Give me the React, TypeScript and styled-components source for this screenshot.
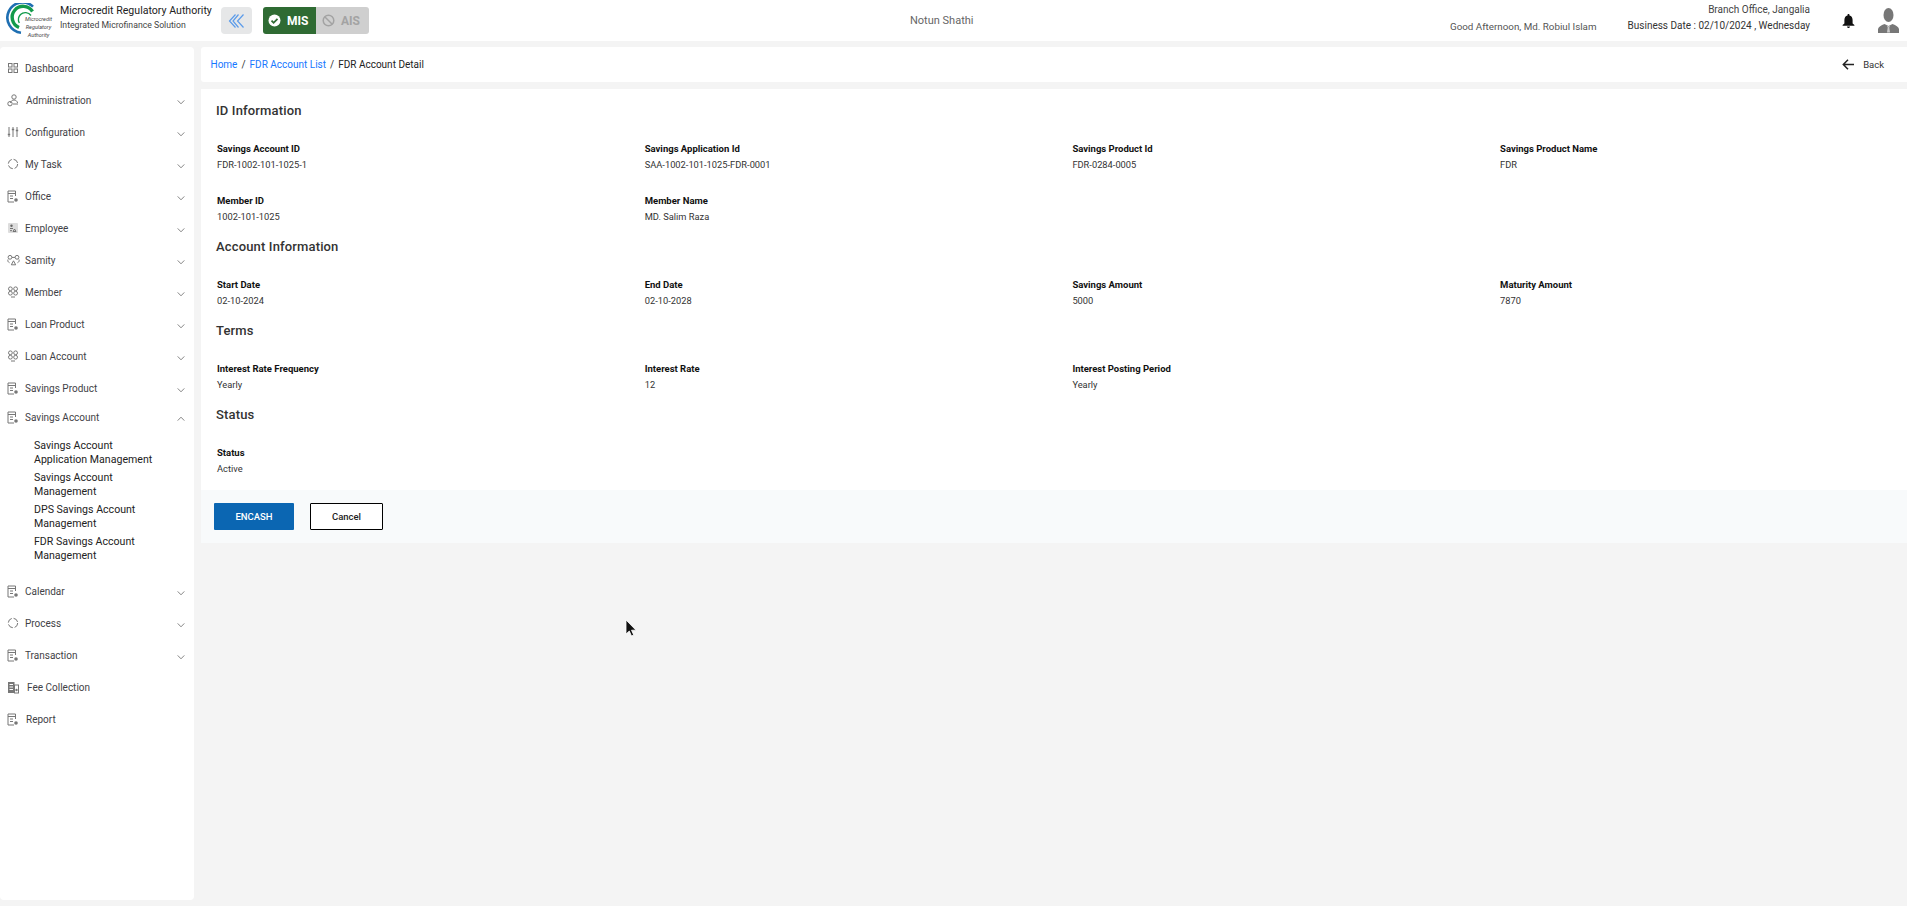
import styled, { createGlobalStyle } from 'styled-components';

const GlobalStyle = createGlobalStyle`
  html, body {
    margin: 0;
    padding: 0;
    background: #f4f4f4;
    font-family: Roboto, "Liberation Sans", sans-serif;
    overflow: hidden;
  }
  * { box-sizing: border-box; }
`;

type IconName = 'grid' | 'admin' | 'sliders' | 'ring' | 'doc' | 'badge' | 'samity' | 'people' | 'fee';

function MenuIcon({ name }: { name: IconName }) {
  const common = { fill: 'none', stroke: '#777', strokeWidth: 1 };
  switch (name) {
    case 'grid':
      return (
        <svg width="12" height="12" viewBox="0 0 12 12" {...common}>
          <rect x="1.5" y="1.5" width="3.5" height="3.5" />
          <rect x="7" y="1.5" width="3.5" height="3.5" />
          <rect x="1.5" y="7" width="3.5" height="3.5" />
          <rect x="7" y="7" width="3.5" height="3.5" />
        </svg>
      );
    case 'admin':
      return (
        <svg width="12" height="13" viewBox="0 0 12 13" {...common}>
          <circle cx="7" cy="3" r="2.2" />
          <path d="M3.500 9c.3-2 1.800-3 3.500-3s3.200 1 3.600 3" />
          <circle cx="3" cy="9.700" r="2.200" />
          <path d="M6 10h5" />
        </svg>
      );
    case 'sliders':
      return (
        <svg width="12" height="12" viewBox="0 0 12 12" {...common}>
          <path d="M2 1v10M6 1v10M10 1v10" />
          <path d="M.8 8.500h2.400M4.800 3.500h2.400M8.800 4.500h2.400" strokeWidth="1.4" />
        </svg>
      );
    case 'ring':
      return (
        <svg width="12" height="12" viewBox="0 0 12 12" {...common}>
          <circle cx="6" cy="6" r="4.700" strokeDasharray="5.500 1.900" />
        </svg>
      );
    case 'doc':
      return (
        <svg width="12" height="13" viewBox="0 0 12 13" {...common}>
          <path d="M8.500 6V1H1v11h6" />
          <path d="M1 3.500h7.500M3 6h3M3 8.500h3" />
          <circle cx="9" cy="10" r="1.800" fill="#777" stroke="none" />
        </svg>
      );
    case 'badge':
      return (
        <svg width="12" height="12" viewBox="0 0 12 12">
          <rect x="1" y="1" width="10" height="10" rx="1" fill="#ddd" />
          <circle cx="4.500" cy="3.800" r="1.200" fill="#666" />
          <path d="M3 6.500h3M6 9.500l1.500-2.500 1.500 2.500zM3 8.700h2" stroke="#666" fill="none" strokeWidth="0.9" />
        </svg>
      );
    case 'samity':
      return (
        <svg width="13" height="12" viewBox="0 0 13 12" {...common}>
          <circle cx="3" cy="3.300" r="1.900" />
          <circle cx="10" cy="3.300" r="1.900" />
          <path d="M1 5.500c-.5 1.500 0 2.500 1.500 3.200M12 5.500c.5 1.500 0 2.500-1.500 3.200" />
          <path d="M4.300 10.800l2.200-4 2.200 4zM5 3.400h3" />
        </svg>
      );
    case 'people':
      return (
        <svg width="12" height="12" viewBox="0 0 12 12" {...common}>
          <circle cx="3.400" cy="2.800" r="1.900" />
          <circle cx="8.600" cy="2.800" r="1.900" />
          <circle cx="3.400" cy="7.200" r="1.900" />
          <circle cx="8.600" cy="7.200" r="1.900" />
          <path d="M4 11h4" />
        </svg>
      );
    case 'fee':
      return (
        <svg width="12" height="13" viewBox="0 0 12 13">
          <rect x="1" y="1" width="6.500" height="11" fill="#777" />
          <rect x="7.500" y="4" width="4" height="8" fill="none" stroke="#777" />
          <path d="M2.500 3.500h3.500M2.500 6h3.500M2.500 8.500h3.500" stroke="#fff" strokeWidth="1" />
          <circle cx="9.500" cy="9" r="1.200" fill="#777" />
        </svg>
      );
  }
}

function Chevron({ up }: { up?: boolean }) {
  return (
    <svg width="8" height="6" viewBox="0 0 8 6" fill="none" stroke="#777" strokeWidth="0.9">
      <path d={up ? 'M.7 4.600L4 1.200l3.300 3.400' : 'M.7 1.400L4 4.800l3.300-3.400'} />
    </svg>
  );
}

function Logo() {
  return (
    <LogoBox>
      <svg width="34" height="34" viewBox="0 0 34 34" fill="none">
        <path d="M27 3.600A15.200 15.200 0 1 0 15 29.800" stroke="#1f6fb2" strokeWidth="2.600" />
        <path d="M26.500 8.500A11 11 0 1 0 13 24.500" stroke="#129a4a" strokeWidth="3.400" />
        <path d="M25 12.500A7 7 0 0 0 14.500 11.500a7.500 7.500 0 0 0-1.200 8.500" stroke="#129a4a" strokeWidth="1.400" />
      </svg>
      <LogoText>
        <span>Microcredit</span>
        <span>Regulatory</span>
        <span>Authority</span>
      </LogoText>
    </LogoBox>
  );
}

interface MenuEntry {
  label: string;
  icon: IconName;
  chevron?: boolean;
  nudge?: number;
}

const topMenu: MenuEntry[] = [
  { label: 'Dashboard', icon: 'grid' },
  { label: 'Administration', icon: 'admin', chevron: true, nudge: 1 },
  { label: 'Configuration', icon: 'sliders', chevron: true },
  { label: 'My Task', icon: 'ring', chevron: true },
  { label: 'Office', icon: 'doc', chevron: true },
  { label: 'Employee', icon: 'badge', chevron: true },
  { label: 'Samity', icon: 'samity', chevron: true },
  { label: 'Member', icon: 'people', chevron: true },
  { label: 'Loan Product', icon: 'doc', chevron: true },
  { label: 'Loan Account', icon: 'people', chevron: true },
  { label: 'Savings Product', icon: 'doc', chevron: true },
];

const bottomMenu: MenuEntry[] = [
  { label: 'Calendar', icon: 'doc', chevron: true },
  { label: 'Process', icon: 'ring', chevron: true },
  { label: 'Transaction', icon: 'doc', chevron: true },
  { label: 'Fee Collection', icon: 'fee', nudge: 2 },
  { label: 'Report', icon: 'doc', nudge: 1 },
];

const subMenu = [
  ['Savings Account', 'Application Management'],
  ['Savings Account', 'Management'],
  ['DPS Savings Account', 'Management'],
  ['FDR Savings Account', 'Management'],
];

const sections = [
  {
    title: 'ID Information',
    fields: [
      ['Savings Account ID', 'FDR-1002-101-1025-1'],
      ['Savings Application Id', 'SAA-1002-101-1025-FDR-0001'],
      ['Savings Product Id', 'FDR-0284-0005'],
      ['Savings Product Name', 'FDR'],
      ['Member ID', '1002-101-1025'],
      ['Member Name', 'MD. Salim Raza'],
    ],
  },
  {
    title: 'Account Information',
    fields: [
      ['Start Date', '02-10-2024'],
      ['End Date', '02-10-2028'],
      ['Savings Amount', '5000'],
      ['Maturity Amount', '7870'],
    ],
  },
  {
    title: 'Terms',
    fields: [
      ['Interest Rate Frequency', 'Yearly'],
      ['Interest Rate', '12'],
      ['Interest Posting Period', 'Yearly'],
    ],
  },
  {
    title: 'Status',
    fields: [['Status', 'Active']],
  },
];

function MenuRow({ entry }: { entry: MenuEntry }) {
  return (
    <Row>
      <IconSlot>
        <MenuIcon name={entry.icon} />
      </IconSlot>
      <RowLabel $nudge={entry.nudge}>{entry.label}</RowLabel>
      {entry.chevron && (
        <ChevronSlot>
          <Chevron />
        </ChevronSlot>
      )}
    </Row>
  );
}

export default function App() {
  return (
    <>
      <GlobalStyle />
      <Page>
        <Header>
          <Brand>
            <Logo />
            <BrandText>
              <BrandName>Microcredit Regulatory Authority</BrandName>
              <BrandSub>Integrated Microfinance Solution</BrandSub>
            </BrandText>
            <CollapseButton>
              <svg width="18" height="16" viewBox="0 0 18 16" fill="none" stroke="#5b9bea" strokeWidth="1.200">
                <path d="M7.500 1.500L1.500 8l6 6.500M10.500 1.500L5 8l5.500 6.500M15.500 1.500L9.500 8l6 6.500" />
              </svg>
            </CollapseButton>
            <ModeSwitch>
              <ModeOn>
                <svg width="13" height="13" viewBox="0 0 13 13">
                  <circle cx="6.500" cy="6.500" r="6" fill="#fff" />
                  <path d="M3.500 6.700l2.100 2.100 3.900-4" fill="none" stroke="#2f6b33" strokeWidth="1.800" />
                </svg>
                MIS
              </ModeOn>
              <ModeOff>
                <svg width="13" height="13" viewBox="0 0 13 13" fill="none" stroke="#a3a3a3" strokeWidth="1.500">
                  <circle cx="6.500" cy="6.500" r="5.300" />
                  <path d="M3 3l7 7" />
                </svg>
                AIS
              </ModeOff>
            </ModeSwitch>
          </Brand>
          <OrgName>Notun Shathi</OrgName>
          <Greeting>Good Afternoon, Md. Robiul Islam</Greeting>
          <BranchInfo>
            <span>Branch Office, Jangalia</span>
            <strong>Business Date : 02/10/2024 , Wednesday</strong>
          </BranchInfo>
          <BellSlot>
            <svg width="13" height="14" viewBox="0 0 13 14" fill="#111">
              <path d="M6.500 0c.6 0 1 .4 1 1v.6C9.600 2.100 10.600 3.900 10.600 6v3.400L12.400 11v.8H.6V11l1.800-1.600V6c0-2.100 1-3.900 3.100-4.400V1c0-.6.400-1 1-1zM5 12.500h3c0 .8-.7 1.500-1.500 1.500S5 13.300 5 12.500z" />
            </svg>
          </BellSlot>
          <Avatar>
            <svg width="21" height="25" viewBox="0 0 21 25" fill="#777">
              <ellipse cx="10.500" cy="7" rx="5" ry="7" />
              <path d="M0 25v-4c.5-2.500 3-3.500 6.500-5l4 2 4-2c3.500 1.500 6 2.500 6.500 5v4z" />
              <path d="M8.800 17.500l1.700 1 1.700-1-.9 2 .7 5h-3l.7-5z" fill="#ccc" />
            </svg>
          </Avatar>
        </Header>
        <Body>
          <Sidebar>
            {topMenu.map((m) => (
              <MenuRow key={m.label} entry={m} />
            ))}
            <OpenRow>
              <IconSlot>
                <MenuIcon name="doc" />
              </IconSlot>
              <RowLabel>Savings Account</RowLabel>
              <ChevronSlot>
                <Chevron up />
              </ChevronSlot>
            </OpenRow>
            <SubList>
              {subMenu.map((lines, i) => (
                <SubItem key={i}>
                  {lines[0]}
                  <br />
                  {lines[1]}
                </SubItem>
              ))}
            </SubList>
            {bottomMenu.map((m) => (
              <MenuRow key={m.label} entry={m} />
            ))}
          </Sidebar>
          <Main>
            <Crumbs>
              <CrumbLink>Home</CrumbLink>
              <CrumbSep>/</CrumbSep>
              <CrumbLink>FDR Account List</CrumbLink>
              <CrumbSep>/</CrumbSep>
              <CrumbNow>FDR Account Detail</CrumbNow>
              <BackLink>
                <svg width="12" height="11" viewBox="0 0 12 11" fill="none" stroke="#222" strokeWidth="1.500">
                  <path d="M12 5.500H1.500M6 .8L1.300 5.500 6 10.200" />
                </svg>
                <span>Back</span>
              </BackLink>
            </Crumbs>
            <Card>
              <Details>
                {sections.map((s) => (
                  <section key={s.title}>
                    <SectionTitle>{s.title}</SectionTitle>
                    <FieldGrid>
                      {s.fields.map(([label, value]) => (
                        <Field key={label}>
                          <FieldLabel>{label}</FieldLabel>
                          <FieldValue>{value}</FieldValue>
                        </Field>
                      ))}
                    </FieldGrid>
                  </section>
                ))}
              </Details>
              <Actions>
                <PrimaryButton>ENCASH</PrimaryButton>
                <OutlineButton>Cancel</OutlineButton>
              </Actions>
            </Card>
          </Main>
        </Body>
        <Cursor>
          <svg width="12" height="18" viewBox="0 0 12 18">
            <path d="M1 1v14l3.300-3 2.200 5 2.200-1-2.200-4.800H11z" fill="#111" stroke="#fff" strokeWidth="0.8" />
          </svg>
        </Cursor>
      </Page>
    </>
  );
}

const Page = styled.div`
  position: relative;
  width: 1907px;
  height: 906px;
  overflow: hidden;
  background: #f4f4f4;
`;

const Header = styled.header`
  display: flex;
  align-items: center;
  height: 41px;
  background: #fff;
`;

const Brand = styled.div`
  display: flex;
  align-items: center;
  width: 910px;
  padding-left: 6px;
`;

const LogoBox = styled.div`
  position: relative;
  width: 54px;
  height: 36px;
  flex: none;
`;

const LogoText = styled.div`
  position: absolute;
  left: 19px;
  top: 12px;
  display: flex;
  flex-direction: column;
  align-items: center;
  font-size: 5.500px;
  line-height: 8px;
  color: #444;
  font-style: italic;

  span {
    white-space: nowrap;
  }
`;

const BrandText = styled.div`
  width: 161px;
  flex: none;
  display: flex;
  flex-direction: column;
  padding-bottom: 5px;
`;

const BrandName = styled.div`
  font-size: 10.600px;
  line-height: 14px;
  color: #222;
  white-space: nowrap;
`;

const BrandSub = styled.div`
  font-size: 8.700px;
  line-height: 14px;
  color: #444;
  white-space: nowrap;
`;

const CollapseButton = styled.div`
  display: flex;
  align-items: center;
  justify-content: center;
  width: 31px;
  height: 27px;
  background: #e6e7e8;
  border-radius: 4px;
`;

const ModeSwitch = styled.div`
  display: flex;
  height: 27px;
  margin-left: 11px;
  border-radius: 3px;
  overflow: hidden;
`;

const ModeOn = styled.div`
  display: flex;
  align-items: center;
  gap: 6px;
  width: 53px;
  padding-left: 5px;
  background: #2f6b33;
  color: #fff;
  font-size: 12px;
  font-weight: 700;
`;

const ModeOff = styled.div`
  display: flex;
  align-items: center;
  gap: 6px;
  width: 53px;
  padding-left: 6px;
  background: #cfcfcf;
  color: #a3a3a3;
  font-size: 12px;
  font-weight: 700;
`;

const OrgName = styled.div`
  width: 540px;
  font-size: 11px;
  color: #666;
`;

const Greeting = styled.div`
  width: 177px;
  padding-top: 11px;
  font-size: 9.800px;
  color: #555;
  white-space: nowrap;
`;

const BranchInfo = styled.div`
  width: 183px;
  display: flex;
  flex-direction: column;
  align-items: flex-end;
  padding-bottom: 5px;
  font-size: 10px;
  line-height: 16px;
  color: #444;
  white-space: nowrap;

  strong {
    font-weight: 400;
    color: #333;
  }
`;

const BellSlot = styled.div`
  display: flex;
  margin-left: 32px;
`;

const Avatar = styled.div`
  display: flex;
  margin-left: 23px;
  padding-bottom: 1px;
`;

const Body = styled.div`
  display: flex;
  gap: 7px;
  padding-top: 6px;
`;

const Sidebar = styled.aside`
  width: 194px;
  height: 853px;
  padding-top: 5px;
  background: #fff;
  border-radius: 4px;
`;

const Row = styled.div`
  display: flex;
  align-items: center;
  height: 32px;
  padding-left: 7px;
  color: #3f3f46;
  font-size: 10px;
`;

const OpenRow = styled(Row)`
  height: 26px;
`;

const IconSlot = styled.span`
  display: flex;
  justify-content: flex-start;
  width: 18px;
`;

const RowLabel = styled.span<{ $nudge?: number }>`
  margin-left: ${(p) => p.$nudge ?? 0}px;
  white-space: nowrap;
`;

const ChevronSlot = styled.span`
  display: flex;
  margin-left: auto;
  margin-right: 9px;
  padding-top: 4px;
`;

const SubList = styled.div`
  display: flex;
  flex-direction: column;
  gap: 4px;
  padding: 9px 0 12px 34px;
`;

const SubItem = styled.div`
  font-size: 10.600px;
  line-height: 14px;
  color: #222;
  white-space: nowrap;
`;

const Main = styled.main`
  flex: 1;
  min-width: 0;
  display: flex;
  flex-direction: column;
  gap: 7px;
`;

const Crumbs = styled.nav`
  display: flex;
  align-items: center;
  height: 35px;
  padding: 0 23px 0 9.500px;
  background: #fff;
  border-radius: 3px 0 0 3px;
  font-size: 10px;
`;

const CrumbLink = styled.span`
  color: #1677ff;
`;

const CrumbSep = styled.span`
  margin: 0 4px;
  color: #333;
`;

const CrumbNow = styled.span`
  color: #222;
`;

const BackLink = styled.div`
  display: flex;
  align-items: center;
  gap: 9px;
  margin-left: auto;
  font-size: 9.500px;
  color: #333;
`;

const Card = styled.div`
  display: flex;
  flex-direction: column;
  background: #fff;
`;

const Details = styled.div`
  height: 401px;
  padding: 13px 0 0 15px;
`;

const SectionTitle = styled.h2`
  margin: 0;
  height: 18px;
  font-size: 13px;
  line-height: 18px;
  font-weight: 500;
  color: #333;
  letter-spacing: 0.15px;
`;

const FieldGrid = styled.div`
  display: grid;
  grid-template-columns: repeat(4, 427.700px);
  row-gap: 22.500px;
  padding: 22px 0 15px 1px;
`;

const Field = styled.div`
  display: flex;
  flex-direction: column;
  gap: 3px;
`;

const FieldLabel = styled.div`
  font-size: 9.500px;
  line-height: 13px;
  font-weight: 700;
  color: #111;
`;

const FieldValue = styled.div`
  font-size: 9.300px;
  line-height: 13px;
  color: #333;
`;

const Actions = styled.div`
  display: flex;
  align-items: flex-start;
  gap: 16px;
  height: 53px;
  padding: 13px 0 0 13px;
  background: #f8fafb;
`;

const PrimaryButton = styled.button`
  width: 80px;
  height: 27px;
  border: none;
  border-radius: 1px;
  background: #0b66b2;
  color: #fff;
  font-family: inherit;
  font-size: 9.500px;
  font-weight: 500;
`;

const OutlineButton = styled.button`
  width: 73px;
  height: 27px;
  border: 1px solid #000;
  border-radius: 1px;
  background: #fff;
  color: #222;
  font-family: inherit;
  font-size: 9.500px;
  font-weight: 500;
`;

const Cursor = styled.div`
  position: absolute;
  left: 625px;
  top: 619px;
  display: flex;
`;
